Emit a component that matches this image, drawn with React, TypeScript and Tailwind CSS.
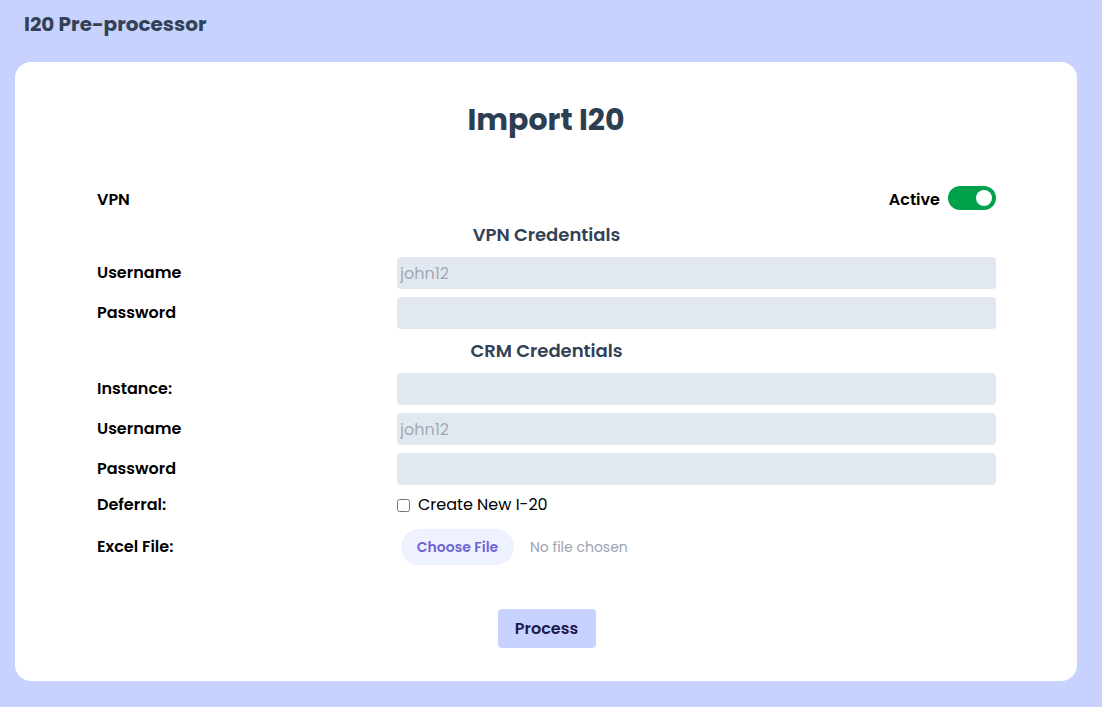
import React from "react";

const font = { fontFamily: "Poppins, Inter, 'Noto Sans', sans-serif" };

function Row({ label, children }: { label: string; children: React.ReactNode }) {
  return (
    <div className="grid grid-cols-[300px_1fr] items-center">
      <div className="text-base font-semibold text-black">{label}</div>
      <div>{children}</div>
    </div>
  );
}

function TextInput({ placeholder }: { placeholder?: string }) {
  return (
    <input
      type="text"
      placeholder={placeholder}
      className="w-full h-8 rounded bg-[#e2e8f0] px-[3px] text-base text-gray-800 placeholder:text-[#a3a9b3] outline-none"
    />
  );
}

export default function App() {
  return (
    <div className="min-h-[707px] w-full bg-[#c7d2fe] flex flex-col" style={font}>
      <header className="h-[62px] px-6 pt-[10px]">
        <h2 className="text-xl leading-7 font-bold text-[#334155]">I20 Pre-processor</h2>
      </header>
      <main className="ml-[15px] mr-[25px] h-[619px] rounded-2xl bg-white pt-[40px]">
        <h1 className="text-center text-[30px] leading-9 font-bold text-[#2d3e50]">Import I20</h1>
        <div className="ml-[82px] w-[899px] flex flex-col">
          <div className="mt-[48px] h-6 flex items-center justify-between">
            <span className="mt-[3px] text-base font-semibold text-black">VPN</span>
            <div className="flex items-center gap-2">
              <span className="mt-[3px] text-base font-semibold text-black">Active</span>
              <div className="w-12 h-6 rounded-full bg-[#00a14b] flex items-center justify-end pr-[4px]">
                <div className="w-4 h-4 rounded-full bg-white" />
              </div>
            </div>
          </div>
          <h3 className="mt-[11px] text-center text-lg leading-7 font-semibold text-[#334155]">VPN Credentials</h3>
          <div className="mt-2 flex flex-col gap-2">
            <Row label="Username">
              <TextInput placeholder="john12" />
            </Row>
            <Row label="Password">
              <TextInput />
            </Row>
          </div>
          <h3 className="mt-2 text-center text-lg leading-7 font-semibold text-[#334155]">CRM Credentials</h3>
          <div className="mt-2 flex flex-col gap-2">
            <Row label="Instance:">
              <TextInput />
            </Row>
            <Row label="Username">
              <TextInput placeholder="john12" />
            </Row>
            <Row label="Password">
              <TextInput />
            </Row>
          </div>
          <div className="mt-[8px] h-6">
            <Row label="Deferral:">
              <label className="flex items-center gap-[8px] text-base text-black">
                <input type="checkbox" className="w-[13px] h-[13px] m-0" />
                <span>Create New I-20</span>
              </label>
            </Row>
          </div>
          <div className="mt-[12px]">
            <Row label="Excel File:">
              <div className="flex items-center pl-1">
                <span className="h-9 w-[113px] rounded-full bg-[#eef2ff] flex items-center justify-center text-sm font-semibold text-[#6f63d3]">
                  Choose File
                </span>
                <span className="ml-4 text-sm text-[#9ca3af]">No file chosen</span>
              </div>
            </Row>
          </div>
          <div className="mt-[44px] flex justify-center">
            <button className="h-[39px] w-[98px] rounded bg-[#c7d2fe] text-base font-semibold text-[#1e1b4b]">
              Process
            </button>
          </div>
        </div>
      </main>
    </div>
  );
}
